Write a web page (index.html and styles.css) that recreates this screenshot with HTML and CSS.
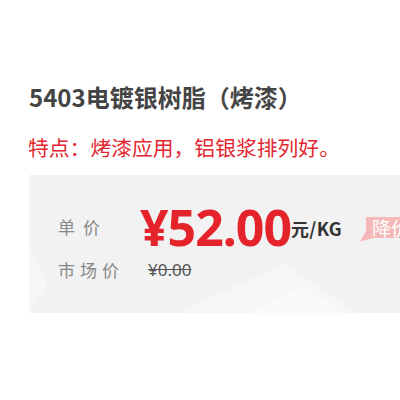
FILE: index.html
```html
<!DOCTYPE html>
<html lang="zh">
<head>
<meta charset="utf-8">
<link rel="stylesheet" href="styles.css">
</head>
<body>
<div class="product">
  <h1 class="title">5403电镀银树脂（烤漆）</h1>
  <p class="feature">特点：烤漆应用，铝银浆排列好。</p>
  <div class="pricebox">
    <svg class="bg" width="400" height="138" viewBox="0 0 400 138" aria-hidden="true">
      <polygon points="0,70 18,108 0,138" fill="#f7f7f7"/>
      <polygon points="150,138 255,88 330,138" fill="#f6f6f6"/>
      <polygon points="220,138 275,110 315,138" fill="#f9f9f9"/>
    </svg>
    <div class="row row-price">
      <span class="label label-unit">单价</span>
      <span class="price">¥52.00</span>
      <span class="unit">元/KG</span>
      <span class="badge">降价</span>
    </div>
    <div class="row row-market">
      <span class="label label-market">市场价</span>
      <span class="old">¥0.00</span>
    </div>
  </div>
</div>
</body>
</html>
```
FILE: styles.css
```css
html, body {
  margin: 0;
  padding: 0;
  background: #fff;
  overflow: hidden;
}
body {
  font-family: "Noto Sans CJK SC", "Noto Sans", sans-serif;
}
.product {
  padding: 82px 0 0 29px;
}
.title {
  margin: 0;
  font-size: 24px;
  line-height: 30px;
  font-weight: 700;
  color: #444;
}
.feature {
  margin: 20px 0 0 -1px;
  font-size: 20.8px;
  line-height: 30px;
  color: #e3262f;
  white-space: nowrap;
}
.pricebox {
  position: relative;
  margin-top: 13px;
  height: 138px;
  background: #f2f2f2;
  overflow: hidden;
  padding-left: 29px;
  box-sizing: border-box;
}
.bg {
  position: absolute;
  left: 0;
  top: 0;
}
.row {
  position: relative;
  display: flex;
  align-items: center;
}
.row > * {
  flex-shrink: 0;
}
.row-price {
  height: 64px;
  padding-top: 20px;
}
.label {
  font-size: 17px;
  line-height: 22px;
  color: #888;
}
.label-unit {
  width: 82px;
  letter-spacing: 8px;
}
.label-market {
  width: 90px;
  letter-spacing: 5px;
}
.price {
  font-family: "Noto Sans", sans-serif;
  font-size: 50px;
  line-height: 64px;
  font-weight: 700;
  color: #e5232b;
  letter-spacing: -1px;
}
.unit {
  font-size: 18px;
  line-height: 24px;
  font-weight: 700;
  color: #333;
  margin-top: 2px;
  letter-spacing: 0.3px;
}
.badge {
  position: relative;
  margin-left: 24px;
  background: #f4b8b8;
  color: #fff;
  font-size: 19px;
  line-height: 21px;
  padding: 0 6px;
  white-space: nowrap;
}
.badge::after {
  content: "";
  position: absolute;
  left: -6px;
  bottom: -4px;
  width: 16px;
  height: 10px;
  background: #f4b8b8;
  clip-path: polygon(0 100%, 6px 0, 16px 60%);
}
.row-market {
  height: 22px;
}
.old {
  font-family: "Noto Sans", sans-serif;
  font-size: 17px;
  line-height: 22px;
  color: #555;
  text-decoration: line-through;
}
```
